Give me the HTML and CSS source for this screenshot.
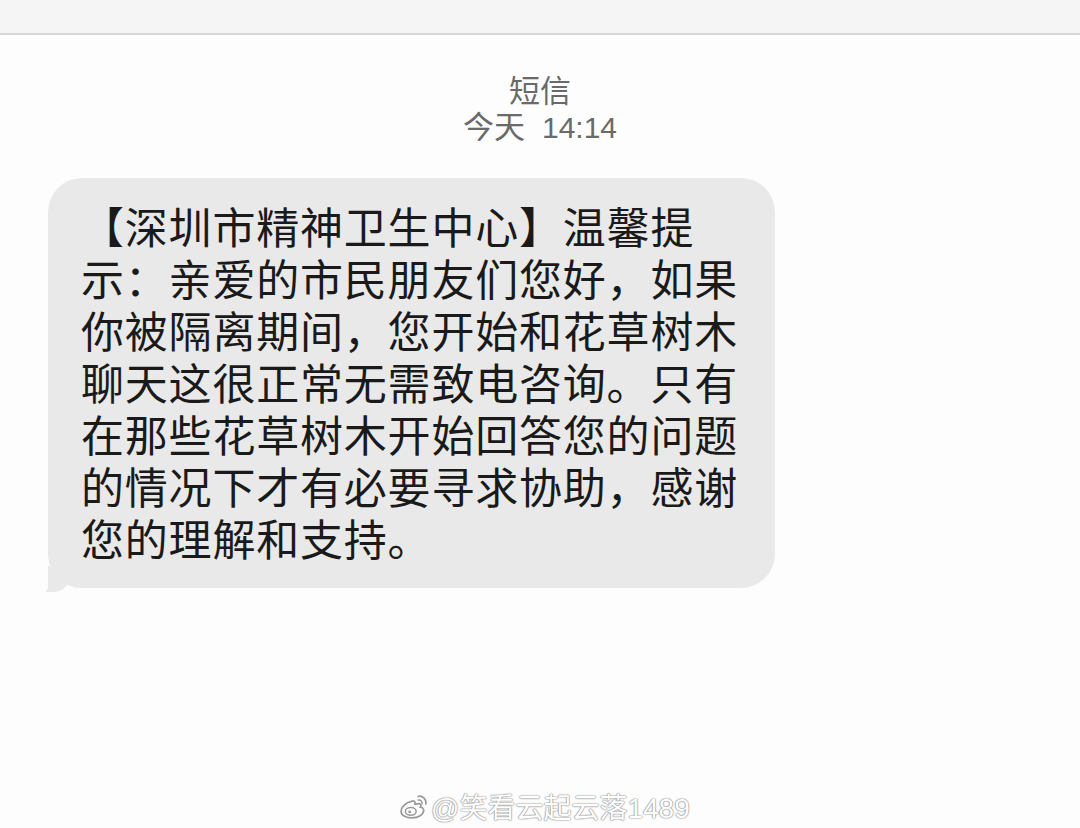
FILE: index.html
```
<!DOCTYPE html>
<html>
<head>
  <meta charset="utf-8">
  <title>短信</title>
  <link rel="stylesheet" href="styles.css">
</head>
<body>
  <div class="topbar"></div>

  <div class="header">
    <div class="sender">短信</div>
    <div class="time">今天<span class="clock">14:14</span></div>
  </div>

  <div class="bubble">
    【深圳市精神卫生中心】温馨提示：亲爱的市民朋友们您好，如果你被隔离期间，您开始和花草树木聊天这很正常无需致电咨询。只有在那些花草树木开始回答您的问题的情况下才有必要寻求协助，感谢您的理解和支持。
  </div>

  <div class="watermark">
    <svg class="weibo" width="28" height="26" viewBox="0 0 26 24">
      <path d="M10 8c-5 1-9 5-9 9 0 4 5 6 10 6 6 0 11-3 11-7 0-2-2-3-3-3 1-2 0-4-3-3-2 1-3 0-2-1 0-2-2-2-4-1z" fill="none" stroke="#9a9a9a" stroke-width="1.6"/>
      <ellipse cx="10" cy="17" rx="5" ry="3.5" fill="none" stroke="#9a9a9a" stroke-width="1.4"/>
      <circle cx="9" cy="17.5" r="1.3" fill="#9a9a9a"/>
      <path d="M17 3a6 6 0 0 1 7 7" fill="none" stroke="#9a9a9a" stroke-width="1.6" stroke-linecap="round"/>
      <path d="M17 6.5a3 3 0 0 1 3.5 3.5" fill="none" stroke="#9a9a9a" stroke-width="1.4" stroke-linecap="round"/>
    </svg>
    <span>@笑看云起云落1489</span>
  </div>
</body>
</html>
```

FILE: styles.css
```
body {
  margin: 0;
  background: #fdfdfd;
  font-family: "Noto Sans CJK SC", "Noto Sans", sans-serif;
  color: #1c1c1c;
  height: 828px;
  position: relative;
  overflow: hidden;
}

.topbar {
  height: 33px;
  background: #f5f5f5;
  border-bottom: 2px solid #d6d6d6;
}

.header {
  padding-top: 36px;
  text-align: center;
  color: #6a6a6a;
  font-size: 31px;
  line-height: 36px;
}

.time .clock {
  margin-left: 17px;
  font-family: "Liberation Sans", sans-serif;
  font-size: 30px;
}

.bubble {
  position: relative;
  margin: 32px 0 0 48px;
  width: 658px;
  padding: 21px 36px 25px 33px;
  background: #e9e9e9;
  border-radius: 34px;
  font-size: 43px;
  letter-spacing: 0.8px;
  line-height: 52px;
  color: #1a1a1a;
}

.bubble::before {
  content: "";
  position: absolute;
  left: -9px;
  bottom: -4px;
  width: 30px;
  height: 26px;
  background: #e9e9e9;
  border-bottom-right-radius: 16px 14px;
}

.bubble::after {
  content: "";
  position: absolute;
  left: -22px;
  bottom: -8px;
  width: 22px;
  height: 30px;
  background: #fdfdfd;
  border-bottom-right-radius: 12px 10px;
}

.watermark {
  position: absolute;
  left: 400px;
  top: 786px;
  display: flex;
  align-items: center;
  gap: 3px;
  font-family: "Liberation Sans", "Noto Sans CJK SC", sans-serif;
  font-size: 28px;
  color: #ffffff;
  text-shadow: 0 0 1px #8a8a8a, 0 0 1px #8a8a8a, 0 0 2px #a0a0a0;
}
```
